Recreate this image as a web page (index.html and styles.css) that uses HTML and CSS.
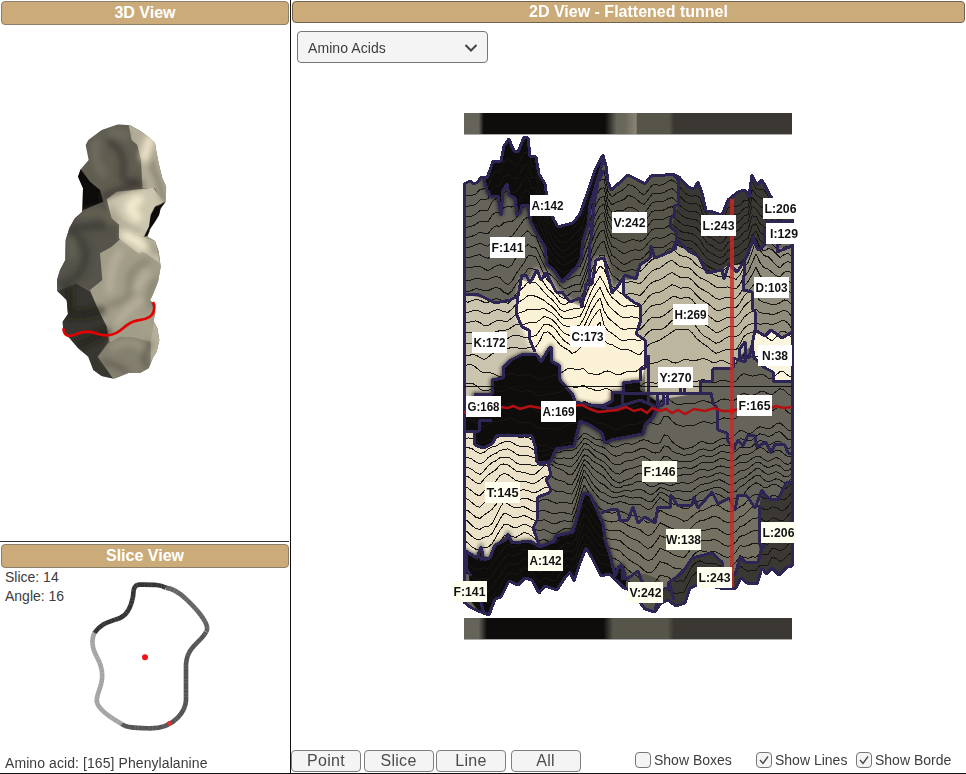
FILE: index.html
```html
<!DOCTYPE html>
<html lang="en">
<head>
<meta charset="utf-8">
<title>Tunnel viewer</title>
<link rel="stylesheet" href="styles.css">
</head>
<body>
<div class="app">
  <div class="side">
    <section class="view3d">
      <h2 class="bar">3D View</h2>
      <svg class="model" viewBox="0 0 450 840" width="150" height="280">
        <defs>
          <filter id="b8" x="-50%" y="-50%" width="200%" height="200%"><feGaussianBlur stdDeviation="9"/></filter>
          <clipPath id="body3d"><path id="outline" d="M235 43L270 46 300 62 325 80 345 100 350 130 356 160 367 205 379 230 377 275 362 295 357 315 345 335 330 357 322 380 345 393 356 425 362 470 354 515 338 555 330 570 343 585 346 610 340 632 352 655 358 690 350 725 338 745 326 775 300 789 265 789 222 806 185 798 160 780 145 740 115 715 85 680 70 665 68 635 84 612 80 570 52 543 51 510 60 480 76 450 77 390 88 355 105 325 127 305 129 235 114 200 122 178 146 150 137 105 145 90 185 60Z"/></clipPath>
        </defs>
        <path class="red" d="M314 380L326 362"/>
        <g clip-path="url(#body3d)">
          <rect width="450" height="840" fill="#605d51"/>
          <path fill="#0d0c0a" d="M105 170L122 178 150 215 180 240 190 275 150 292 120 310 80 365 60 360Z"/>
          <path fill="#55534a" d="M190 277L215 320 237 350 240 388 215 410 180 430 187 510 150 540 110 520 50 545 40 480 80 350 130 300Z"/>
          <path fill="#b3ad98" d="M265 40L275 90 292 105 303 150 307 235 345 235 365 275 390 280 390 60Z"/>
          <path fill="#cdc6af" d="M200 268L230 245 340 233 370 275 362 285 335 310 330 370 310 382 250 355 215 325Z"/>
          <path fill="#a29d88" d="M237 350L300 378 350 380 380 480 330 570 350 620 345 700 290 720 210 700 200 650 175 600 150 540 187 510 180 430 215 410 240 388Z"/>
          <path fill="#c4bea7" d="M237 345L305 380 345 393 360 460 310 425 295 430 237 385Z"/>
          <path fill="#383630" d="M50 545L108 520 150 545 175 600 200 650 205 695 172 740 222 810 140 800 60 680Z"/>
          <path fill="#858170" d="M174 740L205 700 240 680 280 682 332 695 340 760 300 795 220 806Z"/>
          <path fill="#b6b19b" d="M344 620L365 640 360 735 332 760 332 695Z"/>
          <g filter="url(#b8)" fill="none" stroke-linecap="round">
            <path stroke="#34322c" stroke-width="17" opacity=".75" d="M210 95Q255 125 250 175Q240 230 290 210M190 262Q230 235 303 225"/>
            <path stroke="#807c6c" stroke-width="25" opacity=".5" d="M170 95Q155 150 190 190M215 65L260 75"/>
            <path stroke="#5b584c" stroke-width="11" opacity=".75" d="M340 100Q325 150 345 190T370 270"/>
            <path stroke="#37352f" stroke-width="22" opacity=".65" d="M90 365Q150 400 135 455T65 520M100 355L190 345"/>
            <path stroke="#77735f" stroke-width="20" opacity=".5" d="M125 315Q190 290 215 335M95 390V440"/>
            <path stroke="#fff5d8" stroke-width="32" opacity=".75" d="M295 270Q250 285 290 320M330 90L315 140M260 375L310 405"/>
            <path stroke="#8a8572" stroke-width="14" opacity=".6" d="M215 290Q225 345 300 368"/>
            <path stroke="#716d5c" stroke-width="17" opacity=".55" d="M320 455Q260 480 270 525T205 585M350 510Q320 540 330 590M320 385L350 425"/>
            <path stroke="#c3bda7" stroke-width="23" opacity=".6" d="M240 425Q205 475 210 540M300 570Q260 600 235 635M320 490L290 535"/>
            <path stroke="#1c1b17" stroke-width="24" opacity=".65" d="M85 610Q130 620 185 600M85 540V605M115 705L200 665"/>
            <path stroke="#aaa590" stroke-width="20" opacity=".55" d="M220 710Q285 680 310 720M285 610L335 670"/>
            <path stroke="#47453b" stroke-width="15" opacity=".6" d="M190 755Q245 770 260 785M330 700L310 735 320 770"/>
          </g>
          <path fill="#0d0c0a" d="M376 277L345 290 332 315 327 350 312 380 335 375 385 300Z"/>
        </g>
        <path class="red" d="M70 655Q72 675 86 678C110 677 115 665 142 665C170 666 175 677 200 676C245 674 250 640 290 632C325 626 345 620 343 585L339 576"/>
      </svg>
    </section>
    <section class="slice">
      <h2 class="bar">Slice View</h2>
      <div class="readout"><p>Slice: 14</p><p>Angle: 16</p></div>
      <svg class="ring" viewBox="255 125 390 475" width="130" height="158.33">
        <g class="seg">
          <path stroke="#a5a5a5" d="M283 293C268 330 286 355 298 380C325 445 278 480 293 507C305 532 340 552 365 566"/>
          <path stroke="#555" d="M365 566C380 578 410 578 448 579C530 580 557 520 558 495V400C555 335 600 325 618 290"/>
          <path stroke="#646464" d="M618 290C635 268 583 215 560 193C540 173 520 160 497 157"/>
          <path stroke="#353535" d="M497 157C478 147 460 148 418 148C400 150 401 163 399 184C392 220 380 240 360 248C325 261 305 262 283 293"/>
        </g>
        <g class="grain">
          <path d="M283 293C268 330 286 355 298 380C325 445 278 480 293 507C305 532 340 552 365 566C380 578 410 578 448 579C530 580 557 520 558 495V400C555 335 600 325 618 290C635 268 583 215 560 193C540 173 520 160 497 157C478 147 460 148 418 148C400 150 401 163 399 184C392 220 380 240 360 248C325 261 305 262 283 293"/>
        </g>
        <circle cx="435" cy="366" r="9" fill="#ee1515"/><circle cx="508" cy="564" r="7" fill="#e92c2c"/>
      </svg>
      <p class="acid">Amino acid: [165] Phenylalanine</p>
    </section>
  </div>
  <main class="main">
    <h2 class="bar bar-main">2D View - Flattened tunnel</h2>
    <button class="select"><span>Amino Acids</span><svg viewBox="0 0 14 8" width="14" height="8"><path d="M1.5 1L7 6.5 12.5 1"/></svg></button>
    <svg class="map" viewBox="450 105 355 545" width="355" height="545">
      <defs>
        <linearGradient id="stripTop"><stop offset="0" stop-color="#66635a"/><stop offset=".045" stop-color="#66635a"/><stop offset=".06" stop-color="#0e0d0b"/><stop offset=".43" stop-color="#0e0d0b"/><stop offset=".465" stop-color="#68655a"/><stop offset=".49" stop-color="#6a675b"/><stop offset=".525" stop-color="#898473"/><stop offset=".528" stop-color="#57554a"/><stop offset=".625" stop-color="#57554a"/><stop offset=".64" stop-color="#3b3833"/></linearGradient>
        <linearGradient id="stripBottom"><stop offset="0" stop-color="#66635a"/><stop offset=".045" stop-color="#66635a"/><stop offset=".07" stop-color="#0e0d0b"/><stop offset=".425" stop-color="#0e0d0b"/><stop offset=".455" stop-color="#57554a"/><stop offset=".62" stop-color="#57554a"/><stop offset=".64" stop-color="#3b3833"/></linearGradient>
        <clipPath id="sheet"><path id="sheetClip"/></clipPath>
        <filter id="soft" x="-10%" y="-10%" width="120%" height="120%"><feGaussianBlur stdDeviation="2.2"/></filter>
      </defs>
      <path fill="url(#stripTop)" d="M464 113H792V134H464Z"/><path class="rule" d="M464 134.5H792M464 639.5H792"/>
      <path fill="url(#stripBottom)" d="M464 618H792V639H464Z"/>
      <g clip-path="url(#sheet)">
        <g id="fills"></g>
        <g id="contours"></g>
        <g id="borders"></g>
      </g>
      <path id="edge" class="border"/>
      <path class="flat" d="M464 386.500H792"/>
      <path class="scan" d="M464 413L475 408 484 411 492 412 500 407 508 408 513 406 520 409 530 406 540 408 549 409 560 411 570 406 582 405 590 409 598 412 608 411 617 410 626 407 634 411 641 409 647 413 652 408 660 411 666 409 672 413 678 410 685 414 694 409 705 411 714 408 722 411 732 411 742 408 750 410 768 409 776 406 783 408 792 407"/>
      <path class="cursor" d="M732 199V587"/><circle cx="732" cy="411" r="2.5" fill="#e01010"/>
      <g id="tags"></g>
    </svg>
    <div class="tools">
      <button class="btn">Point</button><button class="btn">Slice</button><button class="btn">Line</button><button class="btn btn-all">All</button>
      <label class="check c1"><i class="box"></i>Show Boxes</label>
      <label class="check c2"><i class="box"><svg viewBox="0 0 12 12" width="12" height="12"><path d="M2 6L5 9.500 10 2.500"/></svg></i>Show Lines</label>
      <label class="check c3"><i class="box"><svg viewBox="0 0 12 12" width="12" height="12"><path d="M2 6L5 9.500 10 2.500"/></svg></i>Show Borde</label>
    </div>
  </main>
</div>
<script src="map.js"></script>
</body>
</html>
```
FILE: styles.css
```css
*{box-sizing:border-box}
body{margin:0;background:#fff;font-family:"Liberation Sans",Arial,sans-serif;color:#3c3c3c}
p,h2{margin:0}
.app{display:grid;grid-template-columns:291px 675px;width:966px;height:774px;border-bottom:1px solid #111;overflow:hidden}
.side{border-right:1px solid #111;display:grid;grid-template-rows:542px 231px}
.view3d{border-bottom:1px solid #333;margin-right:1px;padding:1px 0 0 1px}
.bar{height:24px;width:288px;border:1px solid #8b8069;border-radius:4px;background:#cbab79;color:#fff;font-size:16px;line-height:22px;text-align:center}
.model{display:block;margin:85px 0 0 39px}
.red{fill:none;stroke:#e40000;stroke-width:8;stroke-linejoin:round}
.slice{padding:2px 0 0 1px;display:flex;flex-direction:column}
.slice .bar{flex:none}
.readout{height:9px;margin-left:4px;font-size:14px;line-height:19px}
.ring{display:block;flex:none;margin-left:84px}
.seg{fill:none;stroke-width:14;stroke-linejoin:round}
.grain{fill:none;stroke:#fff;stroke-width:15;stroke-dasharray:1.5 11 1 19 1.500 7;opacity:.2}
.acid{margin:18px 0 0 4px;font-size:14px;line-height:20px;letter-spacing:.08px}
.main{display:flex;flex-direction:column;align-items:flex-start;padding:1px 0 0 1px;min-width:0}
.bar-main{width:673px;height:22px;line-height:20px;border-color:#6f624c}
.select{display:flex;align-items:center;justify-content:space-between;width:191px;height:32px;margin:8px 0 0 5px;padding:1px 9px 0 10px;border:1px solid #777;border-radius:4px;background:#f4f4f4;font:14px "Liberation Sans",Arial,sans-serif;letter-spacing:.08px;color:#3c3c3c}
.select svg path{fill:none;stroke:#444;stroke-width:2}
.map{display:block;margin:42px 0 0 158px}
.rule{stroke:#aaa}
.border{fill:none;stroke:#2d2554;stroke-width:3;stroke-linejoin:round;shape-rendering:crispEdges}
.contour{fill:none;stroke:#171612;stroke-width:1;shape-rendering:crispEdges}
.flat{stroke:#111;stroke-width:1}
.scan{fill:none;stroke:#b80f12;stroke-width:2.500}
.cursor{stroke:#c92b25;stroke-opacity:.8;stroke-width:4}
.tag{font-weight:bold;font-size:13px;fill:#111}
.tools{display:flex;align-items:flex-start;width:674px;height:23px;margin:100px 0 0 -1px}
.btn{flex:none;width:70px;height:22px;margin-right:2.500px;padding:0;border:1px solid #7e7e7e;border-radius:4px;background:#f4f4f4;color:#4c4c4c;font:16px/18px "Liberation Sans",Arial,sans-serif;letter-spacing:.3px}
.btn-all{margin-left:2px}
.check{flex:none;display:flex;align-items:center;height:19px;font-size:14px}
.box{width:16px;height:16px;margin-right:3px;border:1px solid #777;border-radius:4px;background:#f4f4f4;display:grid;place-items:center;font-style:normal}
.box path{fill:none;stroke:#444;stroke-width:1.300}
.c1{margin-left:52px;width:121px}
.c2{width:100px}
```
FILE: map.js
```js
const NS = 'http://www.w3.org/2000/svg';
const pts = s => s.trim().split(/\s+/).map(p => p.split(',').map(Number));
const add = (parent, tag, attrs) => {
  const e = document.createElementNS(NS, tag);
  for (const k in attrs) e.setAttribute(k, attrs[k]);
  document.getElementById(parent).appendChild(e);
  return e;
};
const top0 = '464,184 470,181 474,184 478,182 481,177 487,178 490,170 493,161 501,161 504,146 509,139 514,151 518,152 524,137 528,138 530,156 536,157 539,174 545,184 547,198 550,210 554,220 558,227 565,225 573,223 580,214 587,194 595,170 603,155 606,166 608,182 611,190 618,184 628,175 636,179 645,184 651,176 665,175 673,174 679,177 688,187 694,189 698,182 702,193 706,211 713,212 722,215 728,200 738,192 745,190 749,197 752,175 757,185 762,180 770,195 773,200 792,205';
const bottom0 = '464,602 470,607 478,611 481,612 489,615 495,599 501,597 509,581 518,585 525,578 532,580 539,593 545,586 557,590 564,579 570,572 574,581 580,563 586,548 592,558 601,576 609,574 617,581 624,588 630,590 645,609 655,612 660,604 668,600 676,606 685,603 690,588 700,584 720,588 735,589 741,578 747,583 757,584 762,568 766,574 772,568 779,575 787,567 792,566';
const outline = 'M' + top0 + ' ' + bottom0.split(' ').reverse().join(' ') + 'Z';
document.getElementById('sheetClip').setAttribute('d', outline);
document.getElementById('edge').setAttribute('d', outline);

// Shared boundaries between residues.
const upper = '464,294 477,294 487,299 495,303 510,300 518,296 522,275 526,275 530,283 537,270 541,280 546,273 552,284 556,292 562,292 570,302 580,298 582,307 586,284 592,284 596,260 604,258 608,275 612,293 618,286 625,275 636,279 640,265 650,258 651,246 655,258 672,251 677,240 690,252 698,256 707,273 722,270 724,279 729,264 737,272 745,260';
const f141 = '484,179 487,190 491,197 498,196 501,215 503,190 507,184 509,195 515,198 517,215 520,213 522,205 528,205 531,222 537,234 545,247 547,265 554,270 562,282 568,276 576,268 581,258 583,240 588,225 590,205 598,178 604,158';
const humpTop = '474,394 492,394 492,380 503,378 503,368 511,360 523,354 537,355 541,362 548,350 551,347 552,362 559,365 560,380 573,395 575,402 590,405 603,406 612,401 612,392 623,392 623,383 640,381';
const humpBottom = '474,432 475,445 483,448 492,444 497,435 532,436 535,446 537,462 541,465 551,461 556,449 574,446 580,421 590,425 602,433 605,443 611,440 627,437 643,434 645,425 652,418 658,407';
const lower = '464,550 477,558 481,547 484,560 490,558 495,545 506,540 508,534 512,543 530,541 540,547 555,541 556,536 573,532 579,510 584,493 590,495 598,512 603,524 605,540 610,555 615,576 618,568 622,565 626,580';
const wTop = '601,513 613,509 618,510 620,521 628,520 633,507 638,523 645,517 655,523 658,507 670,508 671,495 677,505 692,505 694,497 698,508 712,492 718,504 729,498 735,510 738,495 747,496 755,508 762,490 765,495 770,499 778,500 786,483 792,482';
const l243b = '655,610 660,590 668,588 669,582 678,576 684,570 692,558 700,556 712,553 722,562 723,572 735,575 740,557 745,562 758,562 762,548 765,545';
const regions = [
  ['#66635a', '464,100 792,100 792,640 464,640'],
  ['#0e0d0b', f141 + ' 604,130 484,130', 1],
  ['#57554a', '604,140 604,160 594,200 589,250 582,307 600,265 609,292 636,281 652,260 677,246 680,200 679,140'],
  ['#3b3833', '673,150 678,180 678,205 672,225 677,245 690,252 698,256 707,273 722,270 729,264 737,272 745,260 752,240 758,250 774,240 792,222 792,150'],
  ['#908c7b', '743,265 752,243 753,236 758,250 765,245 773,250 780,248 792,246 792,340 750,338'],
  ['#cbc4ae', '464,294 487,299 495,303 518,296 516,313 522,327 530,335 540,350 560,400 464,405'],
  ['#fbf1d6', '518,296 522,280 530,283 537,270 541,280 546,273 556,292 570,302 582,307 592,284 596,260 604,258 612,293 623,280 624,296 640,305 641,320 638,335 645,340 645,368 640,381 640,402 570,410 535,355 516,313', 1],
  ['#bdb7a0', '624,280 636,279 640,265 650,258 672,251 677,245 690,252 698,256 707,273 722,270 729,264 745,265 743,290 752,292 755,312 755,332 752,345 738,357 733,368 713,369 712,381 700,381 700,393 645,402 645,340 638,335 641,305 625,296'],
  ['#fbf4df', '753,332 765,336 771,330 782,338 792,332 792,381 773,381 773,372 765,368 753,355'],
  ['#0e0d0b', humpTop + ' 640,390 660,404 ' + humpBottom.split(' ').reverse().join(' '), 1],
  ['#0e0d0b', '464,405 480,400 480,433 464,432'],
  ['#ebe2c9', '464,432 473,433 475,445 483,448 492,444 497,435 532,436 537,462 548,463 551,475 546,480 551,490 538,497 537,520 533,528 540,547 512,543 508,534 495,545 490,558 477,558 464,550'],
  ['#747163', wTop + ' 792,630 626,630 615,576 601,513'],
  ['#0e0d0b', lower + ' 630,640 464,640', 1],
  ['#57554a', '626,580 640,573 648,575 660,580 660,625 625,625'],
  ['#3b3833', l243b + ' 765,630 655,630'],
  ['#3b3833', '759,508 762,490 770,499 778,500 786,483 792,482 792,620 760,620'],
  ['#66635a', '464,550 469,573 470,600 480,613 464,620']
];
for (const [fill, points, soft] of regions) {
  add('fills', 'polygon', soft ? {fill, points, stroke: fill, 'stroke-width': 3, filter: 'url(#soft)', opacity: .8} : {fill, points});
  if (soft) add('fills', 'polygon', {fill, points});
}

// Contours blend between traced level curves.
const levels = [
  [top0, 9],
  ['464,278 488,280 500,278 510,284 521,266 528,256 537,260 547,279 562,297 580,292 592,259 603,235 611,265 625,273 640,269 655,258 672,250 690,258 710,275 733,277 750,265 755,238 763,258 774,258 780,265 792,263', 7],
  ['464,353 485,360 505,347 535,350 545,328 573,357 585,340 600,320 605,345 625,350 640,352 655,342 667,338 676,327 690,330 705,348 715,352 738,347 755,330 770,338 778,332 792,338', 1],
  ['464,364 485,373 520,376 550,377 583,366 587,373 620,374 655,363 665,360 690,361 720,360 735,365 753,353 770,360 792,358', 4],
  ['464,440 484,442 500,435 530,438 552,450 571,442 584,433 610,446 637,442 662,443 665,431 683,452 700,443 733,438 755,427 792,428', 4],
  ['464,478 480,482 500,465 530,474 552,465 570,475 585,455 602,468 620,483 637,475 655,478 680,478 705,468 735,468 750,455 770,462 792,460', 4],
  ['464,520 480,528 490,527 503,504 525,507 540,513 573,512 584,478 600,500 621,503 650,508 660,498 682,510 710,495 735,500 748,485 765,488 792,483', 8],
  [bottom0, 1]
].map(([s, n]) => ({p: pts(s), n}));
const at = (p, x) => {
  for (let i = 1; i < p.length; i++) if (x <= p[i][0]) {
    const a = p[i - 1], b = p[i];
    return a[1] + (b[1] - a[1]) * (x - a[0]) / (b[0] - a[0]);
  }
  return p[p.length - 1][1];
};
for (let k = 0; k < levels.length - 1; k++) {
  for (let j = k ? 0 : 1; j < levels[k].n; j++) {
    const t = j / levels[k].n;
    let d = '';
    for (let x = 464, i = 0; x <= 792; x += 4, i++) {
      const rough = x > 735 ? 4 : 2.2;
      const wobble = (Math.sin(i * 1.3 + k * .7) + Math.sin(i * .57 + j * .45 + k)) * rough / 1.6;
      const y = at(levels[k].p, x) * (1 - t) + at(levels[k + 1].p, x) * t + wobble;
      d += (i ? 'L' : 'M') + x + ' ' + y.toFixed(1);
    }
    add('contours', 'path', {d, class: 'contour'});
  }
}

const borders = [
  f141, upper, humpTop, humpBottom, lower, wTop, l243b,
  '604,170 598,182 594,205 592,232 589,250 589,284', '590,222 592,232',
  '673,174 678,180 678,205 674,206 674,215 670,220 671,228 677,232 675,250',
  '518,296 516,313 522,327 529,330 530,340 535,352',
  '623,277 624,295 635,303 640,305 641,320 636,334 645,340 645,368 640,369 640,381',
  '648,355 648,405', '622,405 622,394 711,393 713,403 717,408 718,430 727,433 728,441 735,450',
  '590,405 612,409 640,400 656,407', '657,393 657,405 663,405 663,393 667,393 667,405', '680,393 680,386 684,386 684,393',
  '700,393 700,381 712,381 713,369 733,368 733,358 745,362 745,342 739,350 739,357 749,358 752,345 755,330',
  '745,260 743,290 752,292 752,308 755,312 755,330 765,336 771,330 782,338 792,332',
  '745,260 752,243 753,236 758,250 765,245 764,228', '766,221 792,221', '777,244 777,252 792,246',
  '752,345 754,358 765,368 773,372 773,381 792,381',
  '535,446 537,462 548,463 551,475 546,480 551,490 549,493 538,497 537,520 533,528 540,547',
  '733,450 738,440 743,446 748,435 755,436 757,447 766,442 771,453 775,444 785,445 788,453 792,453',
  '759,505 760,545 763,548', '464,431 479,431 479,421 492,420', '466,550 467,570 471,576',
  '615,576 619,566 622,568 622,580', '626,580 638,571 643,585', '669,582 674,600',
  '478,555 482,560', '480,600 484,613'
];
for (const b of borders) add('borders', 'polyline', {points: b, class: 'border'});

// x and y are the top left corner of each tag.
const tags = [
  ['A:142', 530, 195], ['F:141', 490, 237], ['V:242', 612, 212], ['L:243', 701, 215], ['L:206', 763, 198], ['I:129', 766, 223],
  ['D:103', 754, 277], ['K:172', 472, 332], ['C:173', 570, 326], ['H:269', 673, 304], ['N:38', 758, 345], ['Y:270', 658, 367],
  ['G:168', 466, 396], ['A:169', 541, 401], ['F:165', 737, 395], ['F:146', 642, 461], ['T:145', 485, 482], ['W:138', 666, 529],
  ['L:206', 761, 522], ['A:142', 528, 550], ['F:141', 452, 581], ['V:242', 628, 582], ['L:243', 697, 567]
];
for (const [name, x, y] of tags) {
  const n38 = name === 'N:38', i129 = name === 'I:129', w138 = name === 'W:138';
  add('tags', 'rect', {x, y, width: n38 ? 34 : i129 ? 32 : 35, height: 21, fill: y > 450 ? '#fffff0' : '#fff'});
  const t = add('tags', 'text', {
    x: x + (n38 || i129 ? 4 : w138 ? 0 : 1.5), y: y + 14.5, class: 'tag',
    textLength: n38 ? 26 : i129 ? 28 : w138 ? 35 : 32, lengthAdjust: 'spacingAndGlyphs'
  });
  t.textContent = name;
}
```
